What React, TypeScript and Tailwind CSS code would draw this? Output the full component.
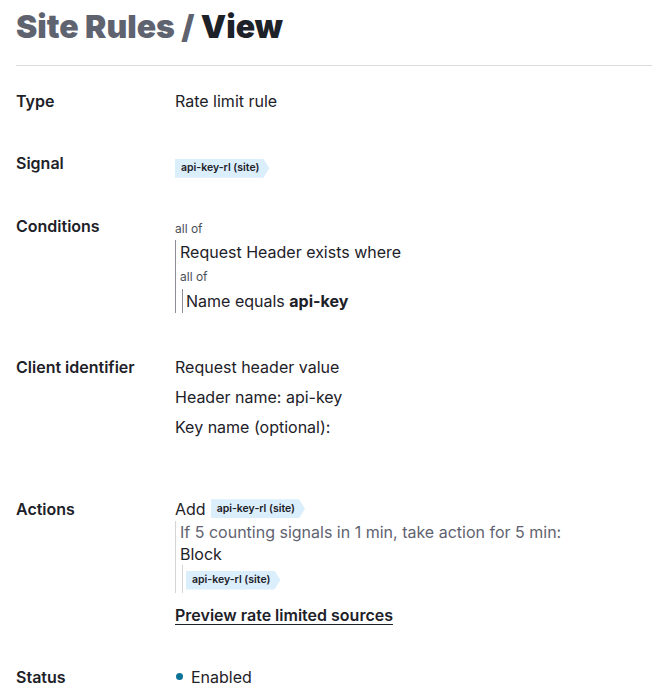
const font = { fontFamily: "Inter, 'Noto Sans', sans-serif" }

function Tag({ children }: { children: React.ReactNode }) {
  return (
    <span className="inline-flex h-[19px] items-center bg-[#dbeefb] pl-[6px] pr-[10px] text-[10.5px] font-semibold leading-none text-[#1d2128] [clip-path:polygon(0_0,calc(100%-6px)_0,100%_50%,calc(100%-6px)_100%,0_100%)]">
      {children}
    </span>
  )
}

function Row({ label, children, className = "" }: { label: string; children: React.ReactNode; className?: string }) {
  return (
    <div className={`flex ${className}`}>
      <div className="w-[159px] shrink-0 text-[16px] leading-6 font-semibold text-[#1d2128]">{label}</div>
      <div className="flex-1 text-[16px] leading-6 text-[#1d2128]">{children}</div>
    </div>
  )
}

export default function App() {
  return (
    <div className="min-h-[700px] bg-white px-4" style={font}>
      <h1 className="pt-[6px] text-[32px] leading-[42px] font-black text-[#5f6370]">
        Site Rules / <span className="text-[#1d2128]">View</span>
      </h1>
      <div className="mt-[17px] -mr-4 border-t border-[#dcdce0]" />

      <div className="pt-[23px]">
        <Row label="Type" className="mb-[38px]">
          Rate limit rule
        </Row>

        <Row label="Signal" className="mb-[36px]">
          <div className="pt-[2px]">
            <Tag>api-key-rl (site)</Tag>
          </div>
        </Row>

        <Row label="Conditions" className="mb-[42px]">
          <div className="pt-[4px] text-[12px] leading-[22px] text-[#4b4f58]">all of</div>
          <div className="border-l border-[#8b8e96] pl-1">
            <div className="leading-6">Request Header exists where</div>
            <div className="pt-[1px] text-[12px] leading-[24px] text-[#4b4f58]">all of</div>
            <div className="ml-[2px] border-l border-[#8b8e96] pl-[3px] leading-6">
              Name equals <span className="font-bold">api-key</span>
            </div>
          </div>
        </Row>

        <Row label="Client identifier" className="mb-[58px]">
          <div className="flex flex-col gap-[6px]">
            <div>Request header value</div>
            <div>Header name: api-key</div>
            <div>Key name (optional):</div>
          </div>
        </Row>

        <Row label="Actions" className="mb-[38px]">
          <div className="flex items-center gap-[5px]">
            Add <Tag>api-key-rl (site)</Tag>
          </div>
          <div className="border-l border-[#d4d5d9] pl-1">
            <div className="leading-[22px] text-[#5f6370]">If 5 counting signals in 1 min, take action for 5 min:</div>
            <div className="leading-[22px]">Block</div>
            <div className="ml-[2px] border-l border-[#d4d5d9] pb-[3px] pl-[3px]">
              <Tag>api-key-rl (site)</Tag>
            </div>
          </div>
          <div className="mt-[10px] font-semibold underline underline-offset-[3px]">Preview rate limited sources</div>
        </Row>

        <Row label="Status">
          <div className="flex items-center gap-[8px]">
            <span className="ml-[1px] h-[7px] w-[7px] rounded-full bg-[#0b7395]" />
            Enabled
          </div>
        </Row>
      </div>
    </div>
  )
}
